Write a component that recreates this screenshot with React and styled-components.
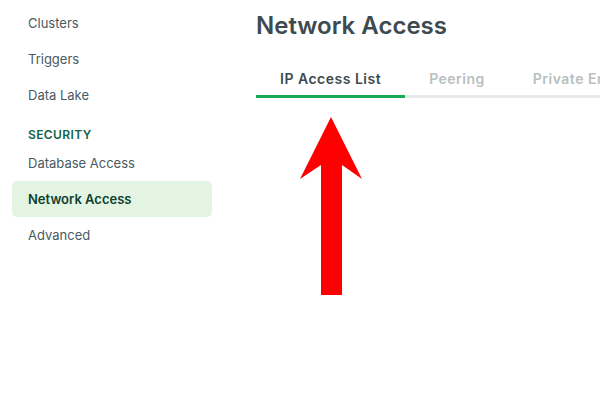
import styled, { createGlobalStyle } from 'styled-components';

const GlobalStyle = createGlobalStyle`
  html, body {
    margin: 0;
    padding: 0;
    background: #ffffff;
    font-family: "Inter", "Liberation Sans", sans-serif;
  }
`;

const sections = [
  { items: ['Clusters', 'Triggers', 'Data Lake'] },
  { title: 'SECURITY', items: ['Database Access', 'Network Access', 'Advanced'] },
];

const tabs = ['IP Access List', 'Peering', 'Private Endpoint'];

const App = () => {
  const activeItem = 'Network Access';
  const activeTab = 'IP Access List';

  return (
    <>
      <GlobalStyle />
      <Page>
        <Sidebar>
          {sections.map((section, i) => (
            <Section key={i}>
              {section.title && <SectionTitle>{section.title}</SectionTitle>}
              {section.items.map((item) => (
                <NavItem key={item} $active={item === activeItem}>
                  {item}
                </NavItem>
              ))}
            </Section>
          ))}
        </Sidebar>

        <Main>
          <Title>Network Access</Title>
          <TabBar>
            {tabs.map((tab) => (
              <Tab key={tab} $active={tab === activeTab}>
                {tab}
              </Tab>
            ))}
          </TabBar>
        </Main>

        {/* annotation arrow pointing at the active tab */}
        <Arrow width="64" height="180" viewBox="0 0 64 180">
          <polygon points="31,0 62,62 42,48 42,178 21,178 21,48 0,62" fill="#ff0000" />
        </Arrow>
      </Page>
    </>
  );
};

export default App;

const Page = styled.div`
  position: relative;
  display: flex;
  width: 600px;
  height: 400px;
  overflow: hidden;
`;

const Sidebar = styled.nav`
  width: 200px;
  flex-shrink: 0;
  padding: 5px 12px 0 12px;
`;

const Section = styled.div`
  display: flex;
  flex-direction: column;
`;

const SectionTitle = styled.div`
  height: 32px;
  box-sizing: border-box;
  padding: 14px 0 0 16px;
  font-size: 12px;
  font-weight: 600;
  letter-spacing: 0.4px;
  color: #116149;
`;

const NavItem = styled.div`
  height: 36px;
  display: flex;
  align-items: center;
  padding-left: 16px;
  border-radius: 5px;
  font-size: 13px;
  color: ${(p) => (p.$active ? '#0e3f2f' : '#4a5a62')};
  font-weight: ${(p) => (p.$active ? 600 : 400)};
  background: ${(p) => (p.$active ? '#e3f4e3' : 'transparent')};
`;

const Main = styled.main`
  flex: 1;
  padding: 10px 0 0 32px;
  min-width: 0;
`;

const Title = styled.h1`
  margin: 0;
  font-size: 24px;
  line-height: 32px;
  font-weight: 600;
  color: #3d4a50;
`;

const TabBar = styled.div`
  display: flex;
  margin-top: 26px;
  border-bottom: 3px solid #e7eaea;
  white-space: nowrap;
`;

const Tab = styled.div`
  padding: 0 24px 5px 24px;
  margin-bottom: -3px;
  font-size: 14px;
  line-height: 22px;
  font-weight: 600;
  letter-spacing: 0.5px;
  color: ${(p) => (p.$active ? '#3d4a50' : '#b8c0c0')};
  border-bottom: 3px solid ${(p) => (p.$active ? '#13aa52' : 'transparent')};
`;

const Arrow = styled.svg`
  position: absolute;
  left: 300px;
  top: 117px;
`;
